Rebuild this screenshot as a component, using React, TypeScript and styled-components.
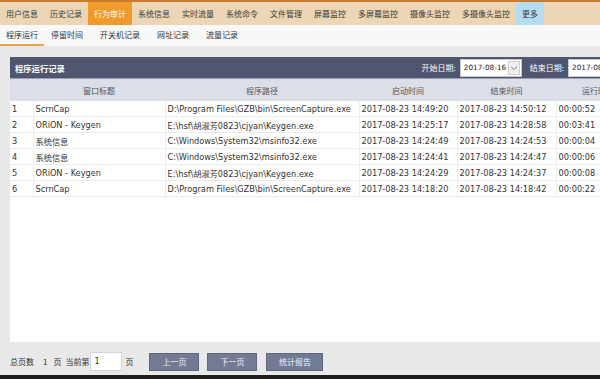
import React from 'react';
import styled, { createGlobalStyle } from 'styled-components';

const GlobalStyle = createGlobalStyle`
  html, body {
    margin: 0;
    padding: 0;
    background: #e9e9e9;
  }
  body {
    font-family: "DejaVu Sans", "Noto Sans CJK SC", sans-serif;
    overflow: hidden;
  }
`;

const Page = styled.div`
  width: 600px;
  height: 379px;
  overflow: hidden;
  display: flex;
  flex-direction: column;
  background: #e9e9e9;
`;

const MenuBar = styled.div`
  display: flex;
  height: 23px;
  border-top: 2px solid #c97b2e;
  background: #ecd6b6;
`;

const MenuItem = styled.div<{ $active?: boolean; $more?: boolean }>`
  display: flex;
  align-items: center;
  padding: 0 6px;
  font-family: "Noto Sans CJK SC", sans-serif;
  font-size: 8px;
  white-space: nowrap;
  color: ${p => (p.$active ? '#ffffff' : '#3a3a3a')};
  background: ${p => (p.$active ? '#f09a2b' : p.$more ? '#b6dcf3' : 'transparent')};
`;

const SubNav = styled.div`
  display: flex;
  height: 21px;
  background: #f8f8f8;
`;

const SubItem = styled.div<{ $active?: boolean }>`
  display: flex;
  align-items: center;
  padding: 0 6px;
  margin-right: ${p => (p.$active ? '1px' : '5px')};
  font-family: "Noto Sans CJK SC", sans-serif;
  font-size: 8px;
  color: #333;
  border-bottom: 2px solid ${p => (p.$active ? '#e8a447' : 'transparent')};
`;

const Content = styled.div`
  padding: 11px 0 0 10px;
`;

const Panel = styled.div`
  width: 630px;
  height: 285px;
  background: #ffffff;
  display: flex;
  flex-direction: column;
`;

const PanelHeader = styled.div`
  height: 21px;
  display: flex;
  align-items: center;
  background: #4f5670;
  border-bottom: 1px solid #9aa0b2;
  padding-left: 5px;
`;

const PanelTitle = styled.div`
  font-family: "Noto Sans CJK SC", sans-serif;
  font-size: 8.3px;
  font-weight: 700;
  color: #ffffff;
  flex: 1;
`;

const FilterLabel = styled.span`
  font-family: "Noto Sans CJK SC", sans-serif;
  font-size: 8px;
  color: #ffffff;
  white-space: nowrap;
  margin: 0 4px 0 8px;
`;

const DateBox = styled.div<{ $w: number }>`
  width: ${p => p.$w}px;
  height: 18px;
  box-sizing: border-box;
  display: flex;
  align-items: center;
  flex-shrink: 0;
  background: #ffffff;
  border: 1px solid #c8c8c8;
  font-size: 7.3px;
  color: #222;
  padding-left: 3px;
  white-space: nowrap;
  overflow: hidden;
`;

const DateText = styled.span`
  flex: 1;
  white-space: nowrap;
`;

const Arrow = styled.div`
  width: 12px;
  height: 14px;
  margin-right: 1px;
  flex-shrink: 0;
  display: flex;
  align-items: center;
  justify-content: center;
  background: #eeeeee;
  border: 1px solid #d0d0d0;
  box-sizing: border-box;
`;

const Table = styled.table`
  width: 100%;
  border-collapse: collapse;
  table-layout: fixed;
`;

const Th = styled.th`
  height: 22px;
  padding: 0;
  background: #dcdfe7;
  font-family: "Noto Sans CJK SC", sans-serif;
  font-size: 8px;
  font-weight: 400;
  color: #555;
  text-align: center;
`;

const Td = styled.td`
  height: 15px;
  padding: 0 0 0 2px;
  font-family: "DejaVu Sans", "Noto Sans CJK SC", sans-serif;
  font-size: 8.2px;
  color: #333;
  white-space: nowrap;
  overflow: hidden;
  border-bottom: 1px solid #ececec;
  border-left: 1px solid #ececec;
  &:first-child {
    border-left: none;
  }
`;

const Footer = styled.div`
  display: flex;
  align-items: center;
  height: 19px;
  margin: 10px 0 0 10px;
  font-family: "Noto Sans CJK SC", sans-serif;
  font-size: 8px;
  color: #333;
`;

const FootText = styled.span<{ $ml?: number }>`
  margin-left: ${p => p.$ml ?? 0}px;
`;

const PageInput = styled.div`
  width: 32px;
  height: 19px;
  box-sizing: border-box;
  margin: 0 3px 0 1px;
  background: #ffffff;
  border: 1px solid #d6d6d6;
  display: flex;
  align-items: center;
  padding-left: 3px;
  font-family: "DejaVu Sans", sans-serif;
  font-size: 8px;
`;

const PageButton = styled.div<{ $w: number; $ml: number }>`
  width: ${p => p.$w}px;
  height: 18px;
  box-sizing: border-box;
  margin-left: ${p => p.$ml}px;
  display: flex;
  align-items: center;
  justify-content: center;
  background: #737b94;
  border: 1px solid #5e6680;
  color: #eef0f5;
  font-size: 8px;
`;

const BottomBar = styled.div`
  margin-top: auto;
  height: 4px;
  background: #1f1f1f;
`;

const menus = ['用户信息', '历史记录', '行为审计', '系统信息', '实时流量', '系统命令', '文件管理', '屏幕监控', '多屏幕监控', '摄像头监控', '多摄像头监控'];
const subs = ['程序运行', '停留时间', '开关机记录', '网址记录', '流量记录'];

const rows = [
  ['1', 'ScrnCap', 'D:\\Program Files\\GZB\\bin\\ScreenCapture.exe', '2017-08-23 14:49:20', '2017-08-23 14:50:12', '00:00:52'],
  ['2', 'ORiON - Keygen', 'E:\\hsf\\胡淑芳0823\\cjyan\\Keygen.exe', '2017-08-23 14:25:17', '2017-08-23 14:28:58', '00:03:41'],
  ['3', '系统信息', 'C:\\Windows\\System32\\msinfo32.exe', '2017-08-23 14:24:49', '2017-08-23 14:24:53', '00:00:04'],
  ['4', '系统信息', 'C:\\Windows\\System32\\msinfo32.exe', '2017-08-23 14:24:41', '2017-08-23 14:24:47', '00:00:06'],
  ['5', 'ORiON - Keygen', 'E:\\hsf\\胡淑芳0823\\cjyan\\Keygen.exe', '2017-08-23 14:24:29', '2017-08-23 14:24:37', '00:00:08'],
  ['6', 'ScrnCap', 'D:\\Program Files\\GZB\\bin\\ScreenCapture.exe', '2017-08-23 14:18:20', '2017-08-23 14:18:42', '00:00:22'],
];

const ChevronDown = () => (
  <svg width="8" height="6" viewBox="0 0 8 6">
    <path d="M1 1.5 L4 4.5 L7 1.5" fill="none" stroke="#777" strokeWidth="1" />
  </svg>
);

export default function App() {
  return (
    <Page>
      <GlobalStyle />
      <MenuBar>
        {menus.map(m => (
          <MenuItem key={m} $active={m === '行为审计'}>{m}</MenuItem>
        ))}
        <MenuItem $more>更多</MenuItem>
      </MenuBar>
      <SubNav>
        {subs.map((s, i) => (
          <SubItem key={s} $active={i === 0}>{s}</SubItem>
        ))}
      </SubNav>
      <Content>
        <Panel>
          <PanelHeader>
            <PanelTitle>程序运行记录</PanelTitle>
            <FilterLabel>开始日期:</FilterLabel>
            <DateBox $w={62}>
              <DateText>2017-08-16</DateText>
              <Arrow><ChevronDown /></Arrow>
            </DateBox>
            <FilterLabel>结束日期:</FilterLabel>
            <DateBox $w={72}>
              <DateText>2017-08-16</DateText>
            </DateBox>
          </PanelHeader>
          <Table>
            <colgroup>
              <col style={{ width: 23 }} />
              <col style={{ width: 132 }} />
              <col style={{ width: 194 }} />
              <col style={{ width: 98 }} />
              <col style={{ width: 99 }} />
              <col />
            </colgroup>
            <thead>
              <tr>
                <Th />
                <Th>窗口标题</Th>
                <Th>程序路径</Th>
                <Th>启动时间</Th>
                <Th>结束时间</Th>
                <Th>运行时间</Th>
              </tr>
            </thead>
            <tbody>
              {rows.map(r => (
                <tr key={r[0]}>
                  {r.map((c, i) => (
                    <Td key={i}>{c}</Td>
                  ))}
                </tr>
              ))}
            </tbody>
          </Table>
        </Panel>
      </Content>
      <Footer>
        <FootText>总页数</FootText>
        <FootText $ml={9}>1</FootText>
        <FootText $ml={6}>页</FootText>
        <FootText $ml={4}>当前第</FootText>
        <PageInput>1</PageInput>
        <FootText>页</FootText>
        <PageButton $w={50} $ml={16}>上一页</PageButton>
        <PageButton $w={50} $ml={8}>下一页</PageButton>
        <PageButton $w={57} $ml={9}>统计报告</PageButton>
      </Footer>
      <BottomBar />
    </Page>
  );
}
